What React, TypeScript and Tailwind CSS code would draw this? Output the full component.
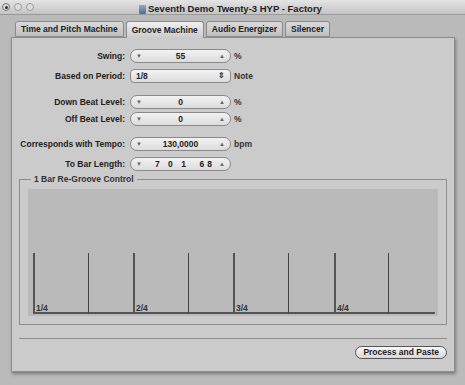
import React from "react";

const font = { fontFamily: '"Liberation Sans", Arial, sans-serif' };

function Stepper({ value, wide }: { value: string; wide?: boolean }) {
    return (
        <div className="w-[101px] h-[14px] rounded-full border border-[#8a8a8a] bg-gradient-to-b from-[#f2f2f2] to-[#dcdcdc] flex items-center px-[5px] text-[8.5px] font-bold text-[#222]">
            <span className="text-[6px] text-[#666]">▼</span>
            <span className={wide ? "flex-1 text-right pr-[4px] tracking-[3px] whitespace-pre" : "flex-1 text-center"}>{value}</span>
            <span className="text-[6px] text-[#666]">▲</span>
        </div>
    );
}

function Row({ label, unit, children }: { label: string; unit?: string; children: React.ReactNode }) {
    return (
        <div className="flex items-center h-[14px]">
            <div className="w-[111px] text-right pr-[5px] text-[8.5px] font-bold text-[#222] whitespace-nowrap">{label}</div>
            {children}
            {unit && <div className="pl-[3px] text-[8.5px] font-bold text-[#333]">{unit}</div>}
        </div>
    );
}

export default function App() {
    const lines = [
        { x: 5, q: "1/4" },
        { x: 60 },
        { x: 105, q: "2/4" },
        { x: 160 },
        { x: 205, q: "3/4" },
        { x: 260 },
        { x: 306, q: "4/4" },
        { x: 360 },
    ];
    return (
        <div className="w-[465px] h-[385px] bg-[#bababa] flex flex-col overflow-hidden" style={font}>
            <div className="h-[15px] bg-gradient-to-b from-[#e4e4e4] to-[#c4c4c4] border-b border-[#9a9a9a] flex items-center relative">
                <div className="flex gap-[4px] pl-[2px]">
                    <div className="w-[8px] h-[8px] rounded-full border border-[#777] bg-[#d8d8d8] flex items-center justify-center">
                        <div className="w-[3px] h-[3px] rounded-full bg-[#333]" />
                    </div>
                    <div className="w-[8px] h-[8px] rounded-full border border-[#999] bg-[#dedede]" />
                    <div className="w-[8px] h-[8px] rounded-full border border-[#999] bg-[#dedede]" />
                </div>
                <div className="absolute left-[139px] top-[2px] flex items-center gap-[2px] text-[9.5px] font-bold text-[#222]">
                    <div className="w-[7px] h-[9px] bg-gradient-to-b from-[#8fa9c8] to-[#4e6f99] rounded-[1px]" />
                    <span>Seventh Demo Twenty-3 HYP - Factory</span>
                </div>
            </div>
            <div className="flex pl-[15px] pt-[6px] gap-[2px] h-[22px] relative z-10">
                {["Time and Pitch Machine", "Groove Machine", "Audio Energizer", "Silencer"].map((t) => {
                    const sel = t === "Groove Machine";
                    return (
                        <div
                            key={t}
                            className={
                                "h-[16px] px-[5px] border border-[#8a8a8a] rounded-t-[3px] flex items-center text-[8.5px] font-bold text-[#222] " +
                                (sel ? "bg-gradient-to-b from-[#f0f0f0] to-[#cbcbcb] border-b-0 h-[17px]" : "bg-gradient-to-b from-[#dadada] to-[#c0c0c0]")
                            }
                        >
                            {t}
                        </div>
                    );
                })}
            </div>
            <div className="mx-[11px] mr-[10px] h-[335px] bg-[#cbcbcb] border border-[#8d8d8d] shadow-[1px_2px_3px_rgba(0,0,0,0.35)] flex flex-col pt-[11px] px-[7px]">
                <div className="flex flex-col gap-[6px]">
                    <Row label="Swing:" unit="%"><Stepper value="55" /></Row>
                    <Row label="Based on Period:" unit="Note">
                        <div className="w-[101px] h-[14px] rounded-[4px] border border-[#8a8a8a] bg-gradient-to-b from-[#f2f2f2] to-[#dcdcdc] flex items-center px-[5px] text-[8.5px] font-bold text-[#222]">
                            <span className="flex-1">1/8</span>
                            <span className="text-[8px] leading-none text-[#444]">⇕</span>
                        </div>
                    </Row>
                </div>
                <div className="flex flex-col gap-[3px] mt-[12px]">
                    <Row label="Down Beat Level:" unit="%"><Stepper value="0" /></Row>
                    <Row label="Off Beat Level:" unit="%"><Stepper value="0" /></Row>
                </div>
                <div className="flex flex-col gap-[6px] mt-[11px]">
                    <Row label="Corresponds with Tempo:" unit="bpm"><Stepper value="130,0000" /></Row>
                    <Row label="To Bar Length:"><Stepper value="7 0 1  68" wide /></Row>
                </div>
                <div className="mt-[8px] relative border border-[#8d8d8d] h-[146px] p-[8px] pt-[9px]">
                    <div className="absolute left-[11px] top-[-7px] bg-[#cbcbcb] px-[3px] text-[8.5px] font-bold text-[#333]">1 Bar Re-Groove Control</div>
                    <div className="w-full h-full bg-[#bababa] relative">
                        <div className="absolute left-[5px] right-[3px] top-[123px] h-[2px] bg-[#555]" />
                        {lines.map((l, i) => (
                            <div
                                key={i}
                                className={"absolute top-[64px] h-[61px] " + (l.q ? "w-[2px] bg-[#555]" : "w-px bg-[#444]")}
                                style={{ left: l.x }}
                            >
                                {l.q && <span className="absolute left-[3px] bottom-[2px] text-[8.5px] font-bold text-[#333] leading-none">{l.q}</span>}
                            </div>
                        ))}
                    </div>
                </div>
                <div className="mt-[13px] h-px bg-[#8d8d8d]" />
                <div className="flex justify-end mt-[7px]">
                    <div className="h-[13px] px-[7px] rounded-full border border-[#555] bg-gradient-to-b from-[#f8f8f8] to-[#d8d8d8] flex items-center text-[8.5px] font-bold text-[#222]">
                        Process and Paste
                    </div>
                </div>
            </div>
        </div>
    );
}
